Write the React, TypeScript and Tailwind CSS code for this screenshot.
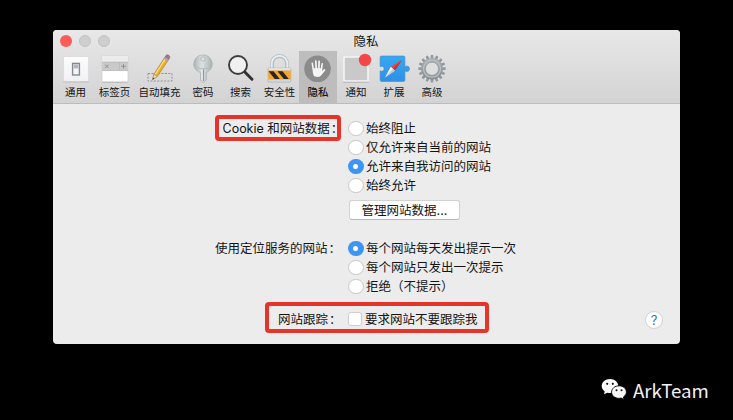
import type { ReactNode } from "react";

const UI = "font-['Inter','Noto_Sans_CJK_SC',sans-serif]";

function Icon({ children }: { children: ReactNode }) {
  return (
    <svg width="34" height="32" viewBox="0 0 34 32" className="block shrink-0">
      {children}
    </svg>
  );
}

const GeneralIcon = () => (
  <Icon>
    <defs>
      <linearGradient id="gen" x1="0" y1="0" x2="0" y2="1">
        <stop offset="0" stopColor="#fdfdfd" />
        <stop offset="1" stopColor="#f0f0f2" />
      </linearGradient>
    </defs>
    <rect x="4.5" y="5.5" width="25" height="25" fill="url(#gen)" stroke="#dededf" />
    <path d="M4 31h26" stroke="#b8b8ba" strokeWidth="0.8" />
    <rect x="13.6" y="12.4" width="6.8" height="11.6" fill="#f4f5f7" stroke="#858991" strokeWidth="1.4" />
    <rect x="14.7" y="13.4" width="4.6" height="4" fill="#b0b6c0" />
  </Icon>
);

const TabsIcon = () => (
  <Icon>
    <rect x="4" y="5" width="26" height="26" rx="1" fill="#fff" stroke="#d0d0d0" strokeWidth="0.8" />
    <rect x="4" y="5" width="26" height="6" fill="#ececec" />
    <rect x="4" y="11" width="26" height="8.5" fill="#cacaca" />
    <path d="M4 11.2h26M4 19.5h26M21.5 11v8.5" stroke="#b8b8b8" strokeWidth="0.8" />
    <path d="M7 13.5l3.6 3.6M10.6 13.5L7 17.1M25.5 13v4.6M23.2 15.3h4.6" stroke="#8c8c8c" strokeWidth="0.9" />
    <path d="M4.5 31.3h25" stroke="#aaa" strokeWidth="0.7" />
  </Icon>
);

const AutofillIcon = () => (
  <Icon>
    <rect x="5" y="22.5" width="24" height="7.5" fill="none" stroke="#8c9098" strokeDasharray="2 1.4" />
    <path d="M9.7 28.4l1.1-5.2L22.2 5.7l3.8 2.4L14.2 25.7z" fill="#e5ae2e" stroke="#a77a28" strokeWidth="0.6" />
    <path d="M12.5 23.2L23 7" stroke="#fae187" strokeWidth="1.2" />
    <path d="M9.7 28.4l1.1-5.2 3.4 2.5z" fill="#ead6b4" stroke="#998566" strokeWidth="0.4" />
    <path d="M9.5 28.8l.6-2.2 1.3.9z" fill="#333" />
    <path d="M20.8 7.8l1.4-2.1 3.8 2.4-1.4 2.1z" fill="#a4a6ae" />
    <path d="M22.2 5.7c1-2.3 2.3-2.4 3.7-1.4 1.3.9 1.4 2.2.1 3.8z" fill="#ae7290" stroke="#765064" strokeWidth="0.4" />
  </Icon>
);

const KeyIcon = () => (
  <Icon>
    <defs>
      <linearGradient id="key" x1="0" y1="0" x2="1" y2="0">
        <stop offset="0" stopColor="#adb5b7" />
        <stop offset="0.45" stopColor="#dce2e2" />
        <stop offset="1" stopColor="#a9b1b3" />
      </linearGradient>
    </defs>
    <path
      fillRule="evenodd"
      d="M17 4a9.2 9 0 0 1 5.7 16l-2.4 1.7v7.3l-2.8 2.7-3-2.2v-7.8L11.3 20A9.2 9 0 0 1 17 4zm0 1.7a2.2 2.2 0 1 0 0 4.4 2.2 2.2 0 0 0 0-4.4z"
      fill="url(#key)"
      stroke="#9aa4a6"
      strokeWidth="0.6"
    />
    <path d="M10 16.5c4.2 1.7 9.8 1.7 14 0" stroke="#b4bcbe" fill="none" />
    <path d="M17.5 18.5v11.5" stroke="#8f989b" strokeWidth="1.1" />
    <path d="M16 19v9.5" stroke="#eef1f1" strokeWidth="0.8" />
  </Icon>
);

const SearchIcon = () => (
  <Icon>
    <circle cx="14" cy="14" r="9" fill="#f0f0f0" stroke="#3d3d3d" strokeWidth="1.9" />
    <path d="M20.8 21l7.2 7.2" stroke="#333" strokeWidth="3" strokeLinecap="round" />
  </Icon>
);

const LockIcon = () => (
  <Icon>
    <path d="M9 18v-5.5a7.5 7.5 0 0 1 15 0V18" fill="none" stroke="#b0bac0" strokeWidth="3.8" />
    <path d="M8.7 18v-5.5a7.8 7.8 0 0 1 15.6 0V18" fill="none" stroke="#e6ecef" strokeWidth="2" />
    <rect x="5" y="17" width="23" height="14.2" rx="1.2" fill="#d0d6da" stroke="#a8afb4" strokeWidth="0.6" />
    <rect x="5.3" y="19.5" width="22.4" height="9" fill="#f8a32b" />
    <path d="M5.5 20.3h5l6.3 7.7h-5zM14.5 20.3h5l6.3 7.7h-5z" fill="#292521" />
    <path d="M6 18h21.5" stroke="#f4f6f7" />
  </Icon>
);

const PrivacyIcon = () => (
  <Icon>
    <circle cx="16.5" cy="17.8" r="13.3" fill="#8b8b8b" />
    <g stroke="#f5f5f5" strokeLinecap="round" fill="none" transform="translate(-.6 .9)">
      <path d="M13 17.5l-1.2-6.2" strokeWidth="1.6" />
      <path d="M15.8 16.5l-.4-7.4" strokeWidth="1.7" />
      <path d="M18.5 16.5l.3-7" strokeWidth="1.7" />
      <path d="M21 17.5l.8-5.6" strokeWidth="1.6" />
      <path d="M20.6 22.2l3.3-4" strokeWidth="1.9" />
      <path d="M12.2 16.4h9.6v3.4l.6.9-2.1 3.5c-.7 1.1-5.6 1.2-6.6 0-1.2-1.6-1.5-4.1-1.5-7.8z" fill="#f5f5f5" stroke="none" />
    </g>
  </Icon>
);

const NotifyIcon = () => (
  <Icon>
    <rect x="5" y="6" width="24" height="24" rx="0.5" fill="#c9c9c9" stroke="#f5f5f5" strokeWidth="1.6" />
    <path d="M4.3 31.2h25.4" stroke="#aaa" strokeWidth="0.8" />
    <circle cx="26" cy="9" r="6.2" fill="#f3484a" />
  </Icon>
);

const ExtensionsIcon = () => (
  <Icon>
    <defs>
      <linearGradient id="ext" x1="0" y1="0" x2="0" y2="1">
        <stop offset="0" stopColor="#38a8f2" />
        <stop offset="1" stopColor="#2f90e4" />
      </linearGradient>
    </defs>
    <path
      d="M4.5 5h22a1.4 1.4 0 0 1 1.4 1.4V16c1-1.6 4.6-1.3 4.6 1.8s-3.6 3.4-4.6 2v9.3a1.4 1.4 0 0 1-1.4 1.4h-22a1.4 1.4 0 0 1-1.4-1.4v-9.4c1.5 1.3 4 .4 4-1.9s-2.5-3.3-4-2V6.4A1.4 1.4 0 0 1 4.5 5z"
      fill="url(#ext)"
      stroke="#3f8fcb"
      strokeWidth="0.6"
    />
    <path d="M24.9 9L13.7 15.7l4.3 3.9z" fill="#e84740" />
    <path d="M8 26.5l5.7-10.8 4.3 3.9z" fill="#f6f6f6" />
    <path d="M24.9 9L15.9 17.7l2.1 1.9z" fill="#b9363b" />
    <path d="M8 26.5l7.9-8.8 2.1 1.9z" fill="#c4cbd2" />
  </Icon>
);

const TEETH = Array.from({ length: 16 }, (_, i) => i * 22.5);

const GearIcon = () => (
  <Icon>
    <defs>
      <linearGradient id="gear" gradientUnits="userSpaceOnUse" x1="0" y1="3" x2="0" y2="31">
        <stop offset="0" stopColor="#b3bbbe" />
        <stop offset="1" stopColor="#81878a" />
      </linearGradient>
    </defs>
    <g fill="#92999c">
      {TEETH.map((a) => (
        <path key={a} d="M15.3 8.5l.6-4.5h2.2l.6 4.5z" transform={`rotate(${a} 17 17.7)`} />
      ))}
    </g>
    <circle cx="17" cy="17.7" r="8.7" fill="none" stroke="url(#gear)" strokeWidth="4" />
    <circle cx="17" cy="17.7" r="8.5" fill="none" stroke="#bcc2c4" strokeWidth="1.3" />
    <circle cx="17" cy="17.7" r="6.6" fill="#dededf" stroke="#848b8e" strokeWidth="0.7" />
  </Icon>
);

const TOOLS: { label: string; icon: ReactNode; width: string; active?: boolean }[] = [
  { label: "通用", icon: <GeneralIcon />, width: "w-[39px]" },
  { label: "标签页", icon: <TabsIcon />, width: "w-[39px]" },
  { label: "自动填充", icon: <AutofillIcon />, width: "w-[51px]" },
  { label: "密码", icon: <KeyIcon />, width: "w-[36px]" },
  { label: "搜索", icon: <SearchIcon />, width: "w-[39px]" },
  { label: "安全性", icon: <LockIcon />, width: "w-[39px]" },
  { label: "隐私", icon: <PrivacyIcon />, width: "w-[38px]", active: true },
  { label: "通知", icon: <NotifyIcon />, width: "w-[38px]" },
  { label: "扩展", icon: <ExtensionsIcon />, width: "w-[38px]" },
  { label: "高级", icon: <GearIcon />, width: "w-[38px]" },
];

function Radio({ label, checked }: { label: string; checked?: boolean }) {
  return (
    <label className="flex h-[19px] items-center gap-[2.5px] whitespace-nowrap">
      <span
        className={
          checked
            ? "flex size-[15.5px] items-center justify-center rounded-full bg-[#3d94f2]"
            : "size-[15.5px] rounded-full border border-[#c6c6c6] bg-white"
        }
      >
        {checked && <span className="size-[5px] rounded-full bg-white" />}
      </span>
      {label}
    </label>
  );
}

const Colon = () => <span className="ml-px">：</span>;

export default function App() {
  return (
    <div className={`flex h-[420px] w-[733px] flex-col bg-black pt-[30px] text-[12.5px] leading-[19px] text-[#141414] ${UI}`}>
      <main className="ml-[53px] flex h-[314px] w-[627px] flex-col overflow-hidden rounded-[4px] bg-[#ececec]">
        <header className="h-[74px] shrink-0 border-b border-[#bcbcbc] bg-linear-to-b from-[#e9e8e9] to-[#d4d3d4]">
          <div className="grid h-[21px] grid-cols-[1fr_auto_1fr] items-center pl-[7px]">
            <div className="flex gap-[7px]">
              <span className="size-3 rounded-full bg-[#fc5b57]" />
              <span className="size-3 rounded-full border border-[#c3c2c3] bg-[#cfcecf]" />
              <span className="size-3 rounded-full border border-[#c3c2c3] bg-[#cfcecf]" />
            </div>
            <h1 className="pr-[8px] pt-[1px] text-[12.5px]">隐私</h1>
          </div>
          <nav className="flex h-[52px] pl-[3px]">
            {TOOLS.map((t) => (
              <button
                key={t.label}
                className={`flex h-full shrink-0 flex-col items-center whitespace-nowrap text-[10.5px] leading-[17px] ${t.width} ${
                  t.active ? "bg-[#bebdbe] font-medium" : ""
                }`}
              >
                {t.icon}
                <span className="h-[17px] pt-px">{t.label}</span>
              </button>
            ))}
          </nav>
        </header>

        <section className="flex h-[102px] pt-[11px]">
          <div className="ml-[162px] mr-[7px] flex h-[26px] w-[126px] items-center whitespace-nowrap rounded-[4px] border-[4px] border-[#e6342b] pl-[3.5px] pt-px">
            Cookie 和网站数据
            <Colon />
          </div>
          <div className="pt-[4px]">
            <Radio label="始终阻止" />
            <Radio label="仅允许来自当前的网站" />
            <Radio label="允许来自我访问的网站" checked />
            <Radio label="始终允许" />
          </div>
        </section>
        <div className="ml-[296px] mt-[-6px] flex h-[20px] w-[111px] items-center justify-center rounded-[3px] border border-[#d2d2d2] border-b-[#b8b8b8] bg-white">
          管理网站数据...
        </div>

        <section className="mt-[19px] flex">
          <div className="ml-[162px] w-[133px] whitespace-nowrap">
            使用定位服务的网站
            <Colon />
          </div>
          <div>
            <Radio label="每个网站每天发出提示一次" checked />
            <Radio label="每个网站只发出一次提示" />
            <Radio label="拒绝（不提示）" />
          </div>
        </section>

        <section className="mt-[6px] flex h-[31px]">
          <div className="ml-[212px] flex w-[224px] items-center whitespace-nowrap rounded-[4px] border-[4px] border-[#e6342b] pl-[9px] pt-[3px]">
            <span className="w-[70px]">
              网站跟踪
              <Colon />
            </span>
            <span className="mr-[3px] size-[14px] rounded-[3px] border border-[#cecece] bg-white" />
            要求网站不要跟踪我
          </div>
          <button className="ml-[156px] mt-[9px] flex size-[18px] items-center justify-center rounded-full border border-[#d0d0d0] bg-white text-[13px] text-[#3275c5]">
            ?
          </button>
        </section>
      </main>

      <footer className="ml-[601px] mt-[32px] flex items-center gap-[6px] font-['Noto_Sans_CJK_SC',sans-serif] text-[18.7px] leading-[28px] text-[#f2f2f2]">
        <svg width="26" height="24" viewBox="0 0 26 24">
          <path d="M9 1C4.4 1 .7 4 .7 8c0 2.2 1.2 4.1 3 5.4L3 16.3l3.3-1.5c.9.2 1.8.3 2.7.3 4.6 0 8.3-3.1 8.3-7S13.6 1 9 1z" fill="#fafafa" />
          <circle cx="6.2" cy="5.8" r="1.1" fill="#111" />
          <circle cx="11.8" cy="5.8" r="1.1" fill="#111" />
          <path d="M18 7.8c-4.2 0-7.4 2.8-7.4 6.3s3.2 6.3 7.4 6.3c.8 0 1.5-.1 2.2-.3l2.9 1.5-.7-2.6c1.9-1.2 3-2.9 3-4.900 0-3.500-3.300-6.300-7.400-6.300z" fill="#fafafa" stroke="#000" strokeWidth="0.9" />
          <circle cx="15.5" cy="12.2" r="1" fill="#111" />
          <circle cx="20.5" cy="12.2" r="1" fill="#111" />
        </svg>
        <span>ArkTeam</span>
      </footer>
    </div>
  );
}
